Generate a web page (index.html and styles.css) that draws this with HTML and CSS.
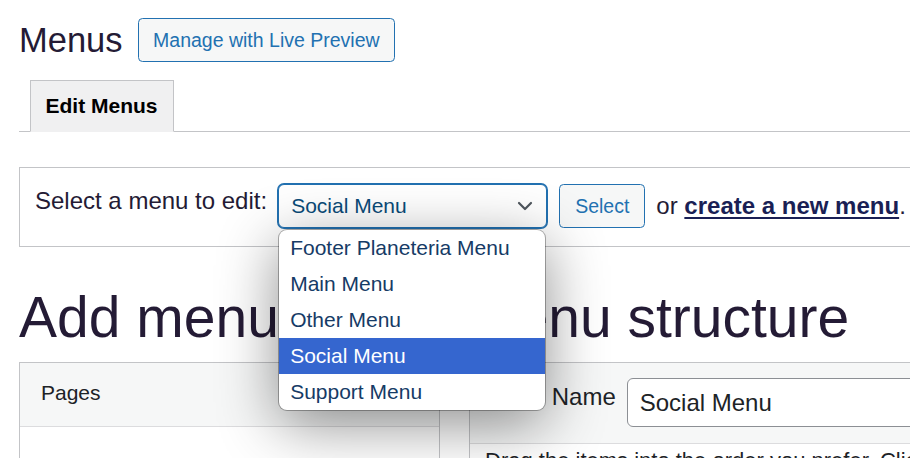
FILE: index.html
```html
<!DOCTYPE html>
<html lang="en">
<head>
<meta charset="utf-8">
<title>Menus</title>
<link rel="stylesheet" href="styles.css">
</head>
<body>
<div class="wrap">
  <div class="title-row">
    <h1 class="page-title">Menus</h1>
    <a class="btn btn-preview" href="#">Manage with Live Preview</a>
  </div>

  <nav class="tabs">
    <a class="tab tab-active" href="#">Edit Menus</a>
  </nav>

  <div class="manage">
    <label class="manage-label">Select a menu to edit:</label>
    <div class="select-wrap">
      <div class="select">
        <span>Social Menu</span>
        <svg class="chevron" width="16" height="10" viewBox="0 0 16 10"><polyline points="2,2 8,8 14,2" fill="none" stroke="#50575e" stroke-width="2.2" stroke-linecap="round" stroke-linejoin="round"/></svg>
      </div>
      <ul class="dropdown">
        <li class="opt">Footer Planeteria Menu</li>
        <li class="opt">Main Menu</li>
        <li class="opt">Other Menu</li>
        <li class="opt opt-selected">Social Menu</li>
        <li class="opt">Support Menu</li>
      </ul>
    </div>
    <button class="btn btn-select">Select</button>
    <span class="or-text">or <a class="create-link" href="#">create a new menu</a>.</span>
  </div>

  <div class="columns">
    <div class="col-left">
      <h2 class="big-heading">Add menu items</h2>
      <div class="panel">
        <div class="panel-head">Pages</div>
        <div class="panel-body"></div>
      </div>
    </div>
    <div class="col-right">
      <h2 class="big-heading">Menu structure</h2>
      <div class="menu-panel">
        <div class="menu-head">
          <label class="menu-name-label">Menu Name</label>
          <div class="name-input">Social Menu</div>
        </div>
        <div class="menu-body">
          <p class="drag-text">Drag the items into the order you prefer. Click the arrow on the right of the item to reveal additional configuration options.</p>
        </div>
      </div>
    </div>
  </div>
</div>
</body>
</html>
```

FILE: styles.css
```css
html, body {
  margin: 0;
  padding: 0;
  background: #fff;
  overflow: hidden;
}

body {
  font-family: "Liberation Sans", Arial, sans-serif;
  color: #1d2327;
}

.wrap {
  width: 1500px;
  padding-left: 19px;
}

/* Title row */
.title-row {
  display: flex;
  align-items: center;
  height: 44px;
  margin-top: 18px;
}

.page-title {
  margin: 0;
  font-size: 34.5px;
  font-weight: 400;
  line-height: 1.3;
  color: #241b35;
}

.btn {
  box-sizing: border-box;
  display: inline-flex;
  align-items: center;
  height: 44px;
  border: 1px solid #2271b1;
  border-radius: 4.5px;
  background: #f6f7f7;
  color: #2271b1;
  font-family: "Liberation Sans", Arial, sans-serif;
  font-size: 19.5px;
  text-decoration: none;
  padding: 0 14px;
}

.btn-preview {
  margin-left: 15.5px;
}

/* Tabs */
.tabs {
  display: flex;
  margin-top: 18px;
  border-bottom: 1px solid #c3c4c7;
}

.tab {
  margin-left: 10.5px;
  margin-bottom: -1px;
  padding: 7px 15px;
  border: 1px solid #c3c4c7;
  border-bottom: 1px solid #f0f0f1;
  background: #f0f0f1;
  color: #000;
  font-size: 21px;
  font-weight: 700;
  line-height: 36px;
  text-decoration: none;
}

/* Manage menus box */
.manage {
  display: flex;
  align-items: center;
  margin-top: 35px;
  padding: 16px 15px 18px 15px;
  border: 1px solid #c3c4c7;
  background: #fff;
}

.manage-label {
  align-self: flex-start;
  font-size: 24px;
  line-height: 34px;
  color: #241b35;
  margin-right: 11px;
}

.select-wrap {
  position: relative;
}

.select {
  box-sizing: border-box;
  width: 269px;
  height: 44px;
  display: flex;
  align-items: center;
  justify-content: space-between;
  padding: 0 12px 0 12px;
  border: 1px solid #2271b1;
  box-shadow: 0 0 0 1px #2271b1;
  border-radius: 6px;
  background: #fff;
  color: #0a4b78;
  font-size: 21px;
}

.chevron {
  display: block;
  margin-right: 1px;
}

.dropdown {
  position: absolute;
  top: 46px;
  left: 1px;
  z-index: 10;
  width: 266px;
  margin: 0;
  padding: 0;
  list-style: none;
  background: #fff;
  border-radius: 8px;
  overflow: hidden;
  box-shadow: 0 0 0 1px rgba(0, 0, 0, 0.3), 0 14px 60px rgba(0, 0, 0, 0.45);
}

.opt {
  height: 36px;
  line-height: 36px;
  padding-left: 11px;
  font-size: 21px;
  color: #163b66;
  white-space: nowrap;
}

.opt-selected {
  background: #3566cf;
  color: #fff;
}

.btn-select {
  margin-left: 12px;
  padding: 0 15px;
  cursor: pointer;
}

.or-text {
  margin-left: 11px;
  font-size: 24px;
  color: #241b35;
}

.create-link {
  color: #1a1f55;
  font-weight: 700;
  text-decoration: underline;
  text-decoration-thickness: 2px;
  text-underline-offset: 3px;
}

/* Columns */
.columns {
  display: flex;
  gap: 29px;
  align-items: flex-start;
}

.col-left {
  width: 421px;
  flex: none;
}

.col-right {
  width: 1000px;
  flex: none;
}

.big-heading {
  margin: 34px 0 9px 0;
  font-size: 57px;
  font-weight: 400;
  line-height: 72px;
  color: #241b35;
  white-space: nowrap;
}

.panel {
  border: 1px solid #c3c4c7;
  background: #fff;
}

.panel-head {
  height: 59px;
  line-height: 59px;
  padding: 0 21px 4px 21px;
  background: #f6f7f7;
  border-bottom: 1px solid #dcdcde;
  font-size: 21px;
  color: #1d2327;
}

.panel-body {
  height: 200px;
}

.menu-panel {
  border-top: 1px solid #c3c4c7;
  border-left: 1px solid #c3c4c7;
  background: #fff;
}

.menu-head {
  display: flex;
  align-items: flex-start;
  gap: 11px;
  padding: 15px 15px 16px 15px;
  background: #f6f7f7;
  border-bottom: 1px solid #dcdcde;
}

.menu-name-label {
  font-size: 24px;
  line-height: 38px;
  color: #1d2327;
  white-space: nowrap;
}

.name-input {
  box-sizing: border-box;
  width: 600px;
  height: 49px;
  display: flex;
  align-items: center;
  padding: 0 12px;
  border: 1px solid #8c8f94;
  border-radius: 6px;
  background: #fff;
  font-size: 24px;
  color: #1d2327;
}

.menu-body {
  padding: 0 15px;
  height: 200px;
}

.drag-text {
  margin: 0;
  font-size: 22px;
  line-height: 1.5;
  color: #1d2327;
  white-space: nowrap;
}
```
